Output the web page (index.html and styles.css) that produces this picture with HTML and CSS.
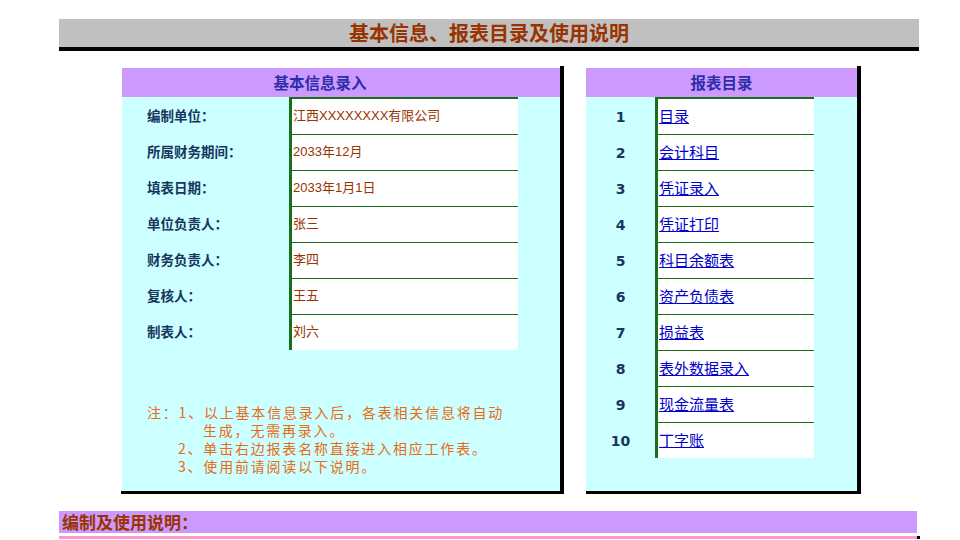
FILE: index.html
```html
<!DOCTYPE html>
<html lang="zh-CN">
<head>
<meta charset="utf-8">
<title>基本信息、报表目录及使用说明</title>
<link rel="stylesheet" href="styles.css">
</head>
<body>
<div class="page">
  <div class="title">基本信息、报表目录及使用说明</div>

  <div class="panels">
    <div class="panel panel-left">
      <div class="panel-body">
        <div class="head head-left">基本信息录入</div>
        <div class="form">
          <div class="row"><div class="label">编制单位：</div><div class="value">江西XXXXXXXX有限公司</div></div>
          <div class="row"><div class="label">所属财务期间：</div><div class="value">2033年12月</div></div>
          <div class="row"><div class="label">填表日期：</div><div class="value">2033年1月1日</div></div>
          <div class="row"><div class="label">单位负责人：</div><div class="value">张三</div></div>
          <div class="row"><div class="label">财务负责人：</div><div class="value">李四</div></div>
          <div class="row"><div class="label">复核人：</div><div class="value">王五</div></div>
          <div class="row last"><div class="label">制表人：</div><div class="value">刘六</div></div>
        </div>
        <div class="note">
          <div class="note-line">注：1、以上基本信息录入后，各表相关信息将自动</div>
          <div class="note-line indent2">生成，无需再录入。</div>
          <div class="note-line indent1">2、单击右边报表名称直接进入相应工作表。</div>
          <div class="note-line indent1">3、使用前请阅读以下说明。</div>
        </div>
      </div>
    </div>

    <div class="panel panel-right">
      <div class="panel-body">
        <div class="head">报表目录</div>
        <div class="list">
          <div class="item"><div class="num">1</div><div class="link-cell"><a href="#">目录</a></div></div>
          <div class="item"><div class="num">2</div><div class="link-cell"><a href="#">会计科目</a></div></div>
          <div class="item"><div class="num">3</div><div class="link-cell"><a href="#">凭证录入</a></div></div>
          <div class="item"><div class="num">4</div><div class="link-cell"><a href="#">凭证打印</a></div></div>
          <div class="item"><div class="num">5</div><div class="link-cell"><a href="#">科目余额表</a></div></div>
          <div class="item"><div class="num">6</div><div class="link-cell"><a href="#">资产负债表</a></div></div>
          <div class="item"><div class="num">7</div><div class="link-cell"><a href="#">损益表</a></div></div>
          <div class="item"><div class="num">8</div><div class="link-cell"><a href="#">表外数据录入</a></div></div>
          <div class="item"><div class="num">9</div><div class="link-cell"><a href="#">现金流量表</a></div></div>
          <div class="item last"><div class="num">10</div><div class="link-cell"><a href="#">丁字账</a></div></div>
        </div>
      </div>
    </div>
  </div>

  <div class="section-bar">编制及使用说明：</div>
  <div class="pink-line"><span class="mark"></span></div>
</div>
</body>
</html>
```

FILE: styles.css
```css
* { box-sizing: border-box; }

html, body {
  margin: 0;
  padding: 0;
  background: #ffffff;
}

body {
  font-family: "Liberation Sans", "Noto Sans CJK SC", sans-serif;
}

.page {
  width: 861px;
  margin-left: 59px;
  padding-top: 19px;
}

.title {
  width: 860px;
  height: 32px;
  background: #c0c0c0;
  border-bottom: 4px solid #000000;
  color: #993300;
  font-family: "Noto Sans CJK SC", sans-serif;
  font-weight: 700;
  font-size: 20px;
  line-height: 28px;
  text-align: center;
}

.panels {
  display: flex;
  margin-top: 15px;
  margin-left: 62px;
  gap: 22px;
}

.panel {
  padding-top: 2px;
  border-right: 4px solid #000000;
  border-bottom: 3px solid #000000;
}

.panel-left { width: 443px; }
.panel-left .panel-body { margin-left: 1px; }
.panel-right { width: 275px; }

.panel-body {
  background: #ccffff;
  height: 423px;
}

.head {
  height: 29px;
  background: #cc99ff;
  color: #2e2eaa;
  font-family: "Noto Sans CJK SC", sans-serif;
  font-weight: 700;
  font-size: 15.5px;
  line-height: 28px;
  text-align: center;
}

.head-left {
  padding-right: 42px;
}

/* left form */
.form {
  display: flex;
  flex-direction: column;
  padding-top: 2px;
}

.row {
  display: flex;
  height: 36px;
}

.label {
  width: 167px;
  padding-left: 25px;
  color: #17365d;
  font-family: "Noto Sans CJK SC", sans-serif;
  font-weight: 700;
  font-size: 13.5px;
  line-height: 33px;
}

.value {
  width: 229px;
  background: #ffffff;
  border-left: 3px solid #1a6e1a;
  border-bottom: 1px solid #1a6e1a;
  padding-left: 1px;
  color: #993300;
  font-size: 13px;
  line-height: 33px;
  white-space: nowrap;
}

.row:first-child .value {
  border-top: 2px solid #1a6e1a;
  height: 38px;
  margin-top: -2px;
}

.row.last .value { border-bottom: none; height: 35px; }

.note {
  margin-top: 52px;
  padding-left: 25px;
  color: #ea6a14;
  font-family: "Noto Sans CJK SC", sans-serif;
  font-size: 14px;
  line-height: 18px;
  letter-spacing: 1.8px;
  white-space: nowrap;
}

.note-line.indent1 { padding-left: 31px; }
.note-line.indent2 { padding-left: 56px; }

/* right list */
.list {
  display: flex;
  flex-direction: column;
  padding-top: 2px;
}

.item {
  display: flex;
  height: 36px;
}

.num {
  width: 69px;
  text-align: center;
  color: #17365d;
  font-family: "DejaVu Sans", sans-serif;
  font-weight: 700;
  font-size: 14px;
  line-height: 36px;
}

.link-cell {
  width: 159px;
  background: #ffffff;
  border-left: 3px solid #1a6e1a;
  border-bottom: 1px solid #1a6e1a;
  padding-left: 1px;
  line-height: 33px;
}

.item:first-child .link-cell {
  border-top: 2px solid #1a6e1a;
  height: 38px;
  margin-top: -2px;
}

.item.last .link-cell { border-bottom: none; height: 35px; }

.link-cell a {
  color: #0000cc;
  font-family: "Noto Sans CJK SC", sans-serif;
  font-size: 15px;
  text-decoration: underline;
}

/* bottom */
.section-bar {
  width: 858px;
  height: 22px;
  margin-top: 17px;
  background: #cc99ff;
  color: #993300;
  font-family: "Noto Sans CJK SC", sans-serif;
  font-weight: 700;
  font-size: 17px;
  line-height: 22px;
  padding-left: 3px;
}

.pink-line {
  position: relative;
  width: 858px;
  height: 3px;
  margin-top: 3px;
  background: #ff99cc;
}

.mark {
  position: absolute;
  left: 858px;
  top: 0;
  width: 3px;
  height: 4px;
  background: #000000;
}
```
